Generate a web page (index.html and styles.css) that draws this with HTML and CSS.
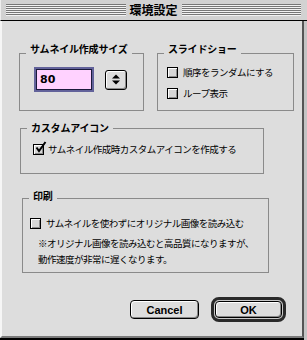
FILE: index.html
```html
<!DOCTYPE html>
<html lang="ja">
<head>
<meta charset="utf-8">
<link rel="stylesheet" href="styles.css">
</head>
<body>
<div class="window">
  <div class="titlebar">
    <div class="stripes"></div>
    <div class="title">環境設定</div>
    <div class="stripes"></div>
  </div>
  <div class="content">
    <div class="row">
      <div class="group g-size">
        <div class="legend">サムネイル作成サイズ</div>
        <div class="size-row">
          <div class="field">80</div>
          <div class="stepper">
            <svg width="8" height="11" viewBox="0 0 8 11"><path d="M0 4.5 L4 0.5 L8 4.5Z M0 6.5 L4 10.5 L8 6.5Z" fill="#000"/></svg>
          </div>
        </div>
      </div>
      <div class="group g-slide">
        <div class="legend">スライドショー</div>
        <div class="checks">
          <div class="check"><span class="box"></span><span>順序をランダムにする</span></div>
          <div class="check"><span class="box"></span><span>ループ表示</span></div>
        </div>
      </div>
    </div>
    <div class="group g-icon">
      <div class="legend">カスタムアイコン</div>
      <div class="check">
        <span class="box checked"><svg class="tick" width="13" height="13" viewBox="0 0 13 13"><path d="M2.5 6.5 L5 10 L11.5 1" fill="none" stroke="#000" stroke-width="2"/></svg></span>
        <span>サムネイル作成時カスタムアイコンを作成する</span>
      </div>
    </div>
    <div class="group g-print">
      <div class="legend">印刷</div>
      <div class="check"><span class="box"></span><span>サムネイルを使わずにオリジナル画像を読み込む</span></div>
      <p class="note">※オリジナル画像を読み込むと高品質になりますが、<br>動作速度が非常に遅くなります。</p>
    </div>
    <div class="buttons">
      <div class="btn cancel">Cancel</div>
      <div class="default-ring"><div class="btn ok">OK</div></div>
    </div>
  </div>
</div>
</body>
</html>
```

FILE: styles.css
```css
* { box-sizing: border-box; }

body {
  margin: 0;
  width: 307px;
  height: 340px;
  overflow: hidden;
  background: #c4c4c4;
  font-family: "Noto Sans CJK JP", sans-serif;
  color: #000;
}

.window {
  width: 307px;
  height: 340px;
  display: flex;
  flex-direction: column;
}

.titlebar {
  height: 21px;
  display: flex;
  align-items: flex-start;
  padding: 4px 6px 0 5px;
  background: #d2d2d2;
  border-bottom: 1px solid #000;
  border-left: 1px solid #eeeeee;
}

.stripes {
  flex: 1;
  height: 12px;
  background: repeating-linear-gradient(to bottom, #777777 0 1px, #f2f2f2 1px 2px);
}

.title {
  font-weight: bold;
  font-size: 12px;
  line-height: 12px;
  padding: 0 4px;
}

.content {
  flex: 1;
  margin-right: 3px;
  background: #dddddd;
  border-left: 2px solid #f6f6f6;
  border-right: 2px solid #555555;
  border-bottom: 2px solid #7a7a7a;
  box-shadow: 0 2px 0 #000;
  margin-bottom: 2px;
  padding: 32px 0 0 17px;
  font-size: 9.5px;
  letter-spacing: -0.5px;
}

.row {
  display: flex;
  gap: 13px;
}

.group {
  border: 1px solid #8a8a8a;
}

.legend {
  width: max-content;
  margin-left: 6px;
  padding: 0 4px;
  background: #dddddd;
  font-weight: bold;
  font-size: 10px;
  line-height: 10px;
  height: 10px;
  letter-spacing: -0.2px;
}

.g-size { width: 125px; height: 58px; }
.g-slide { width: 137px; height: 58px; }
.g-size .legend, .g-slide .legend { margin-top: -10px; }

.size-row {
  display: flex;
  align-items: center;
  gap: 11px;
  margin: 13px 0 0 14px;
}

.field {
  width: 60px;
  height: 25px;
  border: 2px solid #62629a;
  box-shadow: inset 0 0 0 1px #1a1a3a;
  background: #ffd2ff;
  font-family: "DejaVu Sans", sans-serif;
  font-weight: bold;
  font-size: 11px;
  line-height: 21px;
  padding-left: 4px;
  letter-spacing: 0;
}

.stepper {
  width: 22px;
  height: 20px;
  border: 1px solid #000;
  border-radius: 3px;
  background: #dcdcdc;
  box-shadow: inset 1px 1px 0 #fff, inset -1px -1px 0 #8a8a8a;
  display: flex;
  align-items: center;
  justify-content: center;
}

.stepper svg { display: block; }

.checks {
  display: flex;
  flex-direction: column;
  gap: 10px;
  margin: 13px 0 0 9px;
}

.check {
  display: flex;
  align-items: center;
  gap: 5px;
  height: 11px;
  line-height: 11px;
  white-space: nowrap;
}

.box {
  flex: none;
  position: relative;
  width: 11px;
  height: 11px;
  border: 1px solid #000;
  background: #d6d6d6;
  box-shadow: inset 1px 1px 0 #fff, inset -1px -1px 0 #8c8c8c;
}

.tick {
  position: absolute;
  left: 0;
  top: -4px;
  overflow: visible;
}

.g-icon {
  width: 244px;
  height: 46px;
  margin: 17px 0 0 1px;
}
.g-icon .legend { margin-top: -6px; }
.g-icon .check { margin: 11px 0 0 12px; gap: 4px; }

.g-print {
  width: 247px;
  height: 75px;
  margin: 24px 0 0 3px;
}
.g-print .legend { margin-top: -8px; }
.g-print .check { margin: 17px 0 0 7px; }

.note {
  margin: 6px 0 0 15px;
  line-height: 16px;
}

.buttons {
  display: flex;
  justify-content: flex-end;
  align-items: center;
  gap: 12px;
  margin-top: 24px;
  padding-right: 16px;
}

.btn {
  border: 1px solid #000;
  border-radius: 4px;
  background: #dddddd;
  box-shadow: inset 1px 1px 0 #fff, inset -1px -1px 0 #888;
  font-family: "Liberation Sans", Arial, sans-serif;
  font-weight: bold;
  font-size: 11px;
  letter-spacing: 0;
  display: flex;
  align-items: center;
  justify-content: center;
}

.cancel {
  width: 69px;
  height: 19px;
}

.default-ring {
  width: 75px;
  height: 25px;
  border: 3px solid #2a2a2a;
  border-radius: 8px;
  padding: 1px;
  background: #c8c8c8;
}

.ok {
  width: 100%;
  height: 100%;
}
```
